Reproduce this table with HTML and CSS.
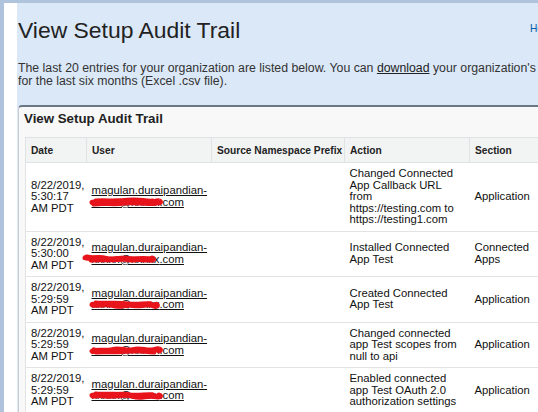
FILE: index.html
```html
<!DOCTYPE html>
<html>
<head>
<meta charset="utf-8">
<link rel="stylesheet" href="styles.css">
</head>
<body>
<div class="page">
  <div class="sidebar"></div>
  <main class="main">
    <div class="title-row">
      <h1 class="page-title">View Setup Audit Trail</h1>
      <a class="help-link" href="#">Help for this Page</a>
    </div>
    <p class="intro">The last 20 entries for your organization are listed below. You can <a class="dl" href="#">download</a> your organization's full setup audit trail<br>for the last six months (Excel .csv file).</p>

    <section class="panel">
      <h2 class="panel-title">View Setup Audit Trail</h2>
      <table class="audit">
        <colgroup>
          <col class="c-date"><col class="c-user"><col class="c-ns"><col class="c-action"><col class="c-section">
        </colgroup>
        <thead>
          <tr>
            <th>Date</th>
            <th>User</th>
            <th>Source Namespace Prefix</th>
            <th>Action</th>
            <th>Section</th>
          </tr>
        </thead>
        <tbody>
          <tr>
            <td>8/22/2019, 5:30:17 AM PDT</td>
            <td><a class="user" href="#">magulan.duraipandian-<span class="redact">xxxxx@xxxxx<svg class="scribble" viewBox="0 0 76 14" preserveAspectRatio="none"><path d="M3 7 C10 5,16 9,24 6 S38 9,46 6 S60 9,68 6 S73 8,73 7" /><path class="thin" d="M4 10 C14 8,24 11,36 9 S56 11,70 9" /><path class="thin" d="M6 4 C16 3,28 5,40 3 S58 5,66 4" /></svg></span>.com</a></td>
            <td></td>
            <td class="action">Changed Connected App Callback URL from https://testing.com to https://testing1.com</td>
            <td>Application</td>
          </tr>
          <tr>
            <td>8/22/2019, 5:30:00 AM PDT</td>
            <td><a class="user" href="#">magulan.duraipandian-<span class="redact shift">xxxxx@xxxxx<svg class="scribble" viewBox="0 0 76 14" preserveAspectRatio="none"><path d="M3 6 C10 8,16 4,24 7 S38 5,46 8 S60 5,68 8 S73 6,73 7" /><path class="thin" d="M4 4 C14 6,24 8,36 6 S56 8,70 6" /><path class="thin" d="M8 10 C18 9,30 11,42 9 S58 10,66 10" /></svg></span>.com</a></td>
            <td></td>
            <td class="action">Installed Connected App Test</td>
            <td>Connected Apps</td>
          </tr>
          <tr>
            <td>8/22/2019, 5:29:59 AM PDT</td>
            <td><a class="user" href="#">magulan.duraipandian-<span class="redact">xxxxx@xxxxx<svg class="scribble" viewBox="0 0 76 14" preserveAspectRatio="none"><path d="M3 7 C10 9,16 5,24 8 S38 6,46 8 S60 5,66 8 S70 7,70 7" /><path class="thin" d="M4 9 C14 6,24 10,36 7 S56 9,68 7" /><path class="thin" d="M6 4 C16 5,28 3,40 5 S56 4,64 5" /></svg></span>.com</a></td>
            <td></td>
            <td class="action">Created Connected App Test</td>
            <td>Application</td>
          </tr>
          <tr>
            <td>8/22/2019, 5:29:59 AM PDT</td>
            <td><a class="user" href="#">magulan.duraipandian-<span class="redact">xxxxx@xxxxx<svg class="scribble" viewBox="0 0 76 14" preserveAspectRatio="none"><path d="M3 8 C10 5,16 9,24 6 S38 9,46 6 S60 9,68 6 S73 8,73 7" /><path class="thin" d="M4 5 C14 8,24 5,36 8 S56 5,70 7" /><path class="thin" d="M6 10 C16 9,28 11,40 9 S58 10,68 10" /></svg></span>.com</a></td>
            <td></td>
            <td class="action">Changed connected app Test scopes from null to api</td>
            <td>Application</td>
          </tr>
          <tr>
            <td>8/22/2019, 5:29:59 AM PDT</td>
            <td><a class="user" href="#">magulan.duraipandian-<span class="redact">xxxxx@xxxxx<svg class="scribble" viewBox="0 0 76 14" preserveAspectRatio="none"><path d="M3 7 C10 5,16 9,24 7 S38 5,46 8 S60 6,68 8 S73 6,73 7" /><path class="thin" d="M4 9 C14 7,24 10,36 8 S56 10,70 8" /><path class="thin" d="M6 4 C16 5,28 3,40 5 S58 4,66 5" /></svg></span>.com</a></td>
            <td></td>
            <td class="action">Enabled connected app Test OAuth 2.0 authorization settings</td>
            <td>Application</td>
          </tr>
        </tbody>
      </table>
    </section>
  </main>
</div>
</body>
</html>
```

FILE: styles.css
```css
html, body {
  margin: 0;
  padding: 0;
  overflow: hidden;
}

body {
  background: #b0c3dd;
  font-family: "Liberation Sans", Arial, sans-serif;
  color: #222;
}

.page {
  display: flex;
  padding: 3px 0 0 4px;
  min-height: 409px;
  width: 900px;
}

.sidebar {
  flex: none;
  width: 13px;
  background: #ffffff;
}

.main {
  flex: none;
  width: 880px;
  background: #dbe8f8;
  padding: 14px 0 0 1px;
}

.title-row {
  display: grid;
  grid-template-columns: 512px auto;
  align-items: start;
}

.page-title {
  margin: 0;
  font-size: 22.9px;
  line-height: 27px;
  font-weight: normal;
  color: #222;
  white-space: nowrap;
}

.help-link {
  margin-top: 6px;
  font-size: 10.2px;
  line-height: 12px;
  color: #015ba7;
  text-decoration: none;
  white-space: nowrap;
}

.intro {
  margin: 18px 0 0 0;
  font-size: 12.3px;
  line-height: 13px;
  color: #333;
  white-space: nowrap;
}

.dl {
  color: #222;
  text-decoration: underline;
}

.panel {
  margin-top: 17px;
  background: #f8f8f8;
  border-top: 2px solid #6a7885;
  border-left: 1px solid #c9cdd1;
  border-top-left-radius: 4px;
  padding: 4px 0 0 0;
  min-height: 320px;
}

.panel-title {
  margin: 0 0 0 5px;
  font-size: 13.3px;
  line-height: 16px;
  font-weight: bold;
  color: #222;
}

.audit {
  margin: 10px 0 0 6px;
  border-collapse: collapse;
  table-layout: fixed;
  width: 519px;
  background: #ffffff;
  border: 1px solid #e0e3e5;
  font-size: 11.3px;
  line-height: 11.5px;
  color: #111;
}

.c-date { width: 61px; }
.c-user { width: 125px; }
.c-ns { width: 133px; }
.c-action { width: 125px; }
.c-section { width: 75px; }

.audit th {
  background: #f2f3f3;
  text-align: left;
  font-size: 10.2px;
  line-height: 12px;
  font-weight: bold;
  color: #222;
  padding: 7px 2px 5px 5px;
  border-bottom: 1px solid #e0e3e5;
  border-left: 1px solid #e0e3e5;
  white-space: nowrap;
  overflow: hidden;
}

.audit th:first-child {
  border-left: none;
}

.audit td {
  padding: 5px 2px 5px 5px;
  vertical-align: middle;
  border-bottom: 1px solid #e3e3e3;
}

.audit td.action {
  padding-right: 5px;
}

.user {
  color: #111;
  text-decoration: underline;
}

.redact {
  position: relative;
}

.scribble {
  position: absolute;
  left: -2px;
  top: 1px;
  width: 72px;
  height: 11px;
  overflow: visible;
}

.redact.shift .scribble {
  left: -9px;
  top: 0;
}

.scribble path {
  fill: none;
  stroke: #e8141c;
  stroke-width: 7;
  stroke-linecap: round;
  stroke-linejoin: round;
}

.scribble path.thin {
  stroke-width: 4;
}
```
